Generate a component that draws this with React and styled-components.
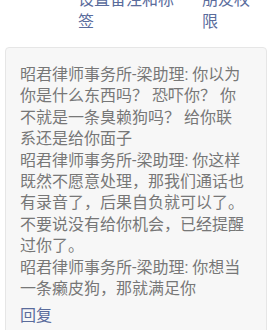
import React from 'react';
import styled, { createGlobalStyle } from 'styled-components';

const GlobalStyle = createGlobalStyle`
    body {
        margin: 0;
        background: #ffffff;
        font-family: Roboto, "Noto Sans CJK SC", sans-serif;
        overflow: hidden;
    }
`

const Page = styled.div`
    display: flex;
    flex-direction: column;
    width: 268px;
`

const ActionRow = styled.div`
    display: flex;
    flex-direction: row;
    gap: 20px;
    margin-top: -11px;
    padding-left: 78px;
`

const Action = styled.a`
    width: ${props => props.width}px;
    font-size: 16px;
    line-height: 22px;
    color: #5a6c9c;
    text-decoration: none;
`

const Card = styled.div`
    margin: 14px 1px 0 5px;
    padding: 16px 19px 24px 14px;
    background-color: #f7f7f7;
    border: 1px solid #e6e6e6;
    border-radius: 4px;
`

const Message = styled.div`
    font-size: 16px;
    line-height: 21.4px;
    color: #777777;
`

const Reply = styled.a`
    display: block;
    margin-top: 6px;
    font-size: 16px;
    line-height: 21.4px;
    color: #5a6c9c;
    text-decoration: none;
`

const messages = [
    '昭君律师事务所-梁助理: 你以为你是什么东西吗？ 恐吓你？ 你不就是一条臭赖狗吗？ 给你联系还是给你面子',
    '昭君律师事务所-梁助理: 你这样既然不愿意处理，那我们通话也有录音了，后果自负就可以了。不要说没有给你机会，已经提醒过你了。',
    '昭君律师事务所-梁助理: 你想当一条癞皮狗，那就满足你',
]

export default function App() {
    return (
        <Page>
            <GlobalStyle />
            <ActionRow>
                <Action width={104}>设置备注和标签</Action>
                <Action width={56}>朋友权限</Action>
            </ActionRow>
            <Card>
                {messages.map((text, index) => (
                    <Message key={index}>{text}</Message>
                ))}
                <Reply>回复</Reply>
            </Card>
        </Page>
    )
}
